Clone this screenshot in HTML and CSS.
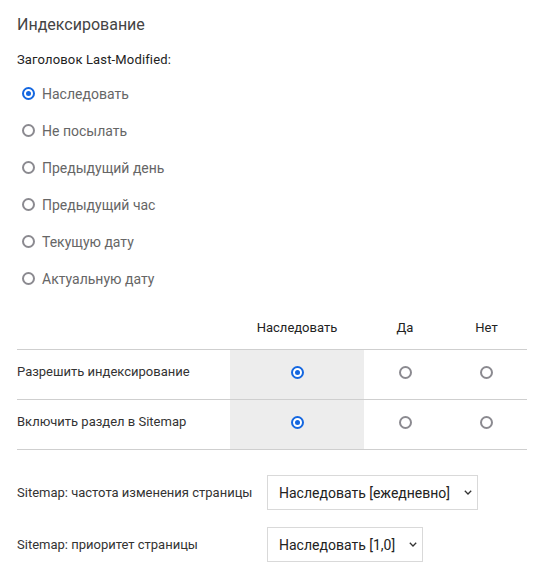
FILE: index.html
```html
<!DOCTYPE html>
<html lang="ru">
<head>
<meta charset="utf-8">
<link rel="stylesheet" href="styles.css">
</head>
<body>
<div class="page">
  <h2 class="title">Индексирование</h2>
  <div class="field-label">Заголовок Last-Modified:</div>
  <ul class="radio-list">
    <li class="radio-item"><span class="radio checked"></span>Наследовать</li>
    <li class="radio-item"><span class="radio"></span>Не посылать</li>
    <li class="radio-item"><span class="radio"></span>Предыдущий день</li>
    <li class="radio-item"><span class="radio"></span>Предыдущий час</li>
    <li class="radio-item"><span class="radio"></span>Текущую дату</li>
    <li class="radio-item"><span class="radio"></span>Актуальную дату</li>
  </ul>
  <table class="matrix">
    <thead>
      <tr>
        <th class="c-label"></th>
        <th class="c-inherit">Наследовать</th>
        <th class="c-yes">Да</th>
        <th class="c-no">Нет</th>
      </tr>
    </thead>
    <tbody>
      <tr>
        <td class="c-label">Разрешить индексирование</td>
        <td class="c-inherit shade"><span class="radio checked"></span></td>
        <td class="c-yes"><span class="radio"></span></td>
        <td class="c-no"><span class="radio"></span></td>
      </tr>
      <tr>
        <td class="c-label">Включить раздел в Sitemap</td>
        <td class="c-inherit shade"><span class="radio checked"></span></td>
        <td class="c-yes"><span class="radio"></span></td>
        <td class="c-no"><span class="radio"></span></td>
      </tr>
    </tbody>
  </table>
  <div class="settings">
    <div class="setting-label">Sitemap: частота изменения страницы</div>
    <div class="select-cell">
      <div class="select"><span>Наследовать [ежедневно]</span><svg class="chev" width="8" height="5" viewBox="0 0 8 5"><path d="M0.8 0.8 L4 4 L7.2 0.8" fill="none" stroke="#333" stroke-width="1.3"/></svg></div>
    </div>
    <div class="setting-label">Sitemap: приоритет страницы</div>
    <div class="select-cell">
      <div class="select"><span>Наследовать [1,0]</span><svg class="chev" width="8" height="5" viewBox="0 0 8 5"><path d="M0.8 0.8 L4 4 L7.2 0.8" fill="none" stroke="#333" stroke-width="1.3"/></svg></div>
    </div>
  </div>
</div>
</body>
</html>
```
FILE: styles.css
```css
html, body {
  margin: 0;
  padding: 0;
  background: #fff;
}
body {
  font-family: Roboto, "Liberation Sans", Arial, sans-serif;
  color: #333;
}
.page {
  padding: 15px 25px 0 17px;
}
.title {
  margin: 0;
  font-size: 16px;
  font-weight: 400;
  line-height: 20px;
  color: #444;
}
.field-label {
  margin-top: 16px;
  font-size: 13px;
  line-height: 18px;
  color: #222;
  letter-spacing: 0.15px;
}
.radio-list {
  list-style: none;
  margin: 6px 0 0 0;
  padding: 0;
}
.radio-item {
  display: flex;
  align-items: center;
  height: 37px;
  padding-left: 5px;
  font-size: 14px;
  color: #666;
}
.radio-item .radio {
  margin-right: 7px;
}
.radio {
  display: inline-block;
  box-sizing: border-box;
  width: 13px;
  height: 13px;
  border: 2px solid #8b8a90;
  border-radius: 50%;
  background: #fff;
  position: relative;
  vertical-align: middle;
}
.radio.checked {
  border-color: #1467e0;
}
.radio.checked::after {
  content: "";
  position: absolute;
  left: 2px;
  top: 2px;
  width: 5px;
  height: 5px;
  border-radius: 50%;
  background: #1467e0;
}
.matrix {
  margin-top: 9px;
  width: 510px;
  border-collapse: collapse;
  font-size: 13px;
  table-layout: fixed;
}
.matrix th {
  font-weight: 400;
  color: #222;
  height: 43px;
  padding: 0;
  text-align: center;
  vertical-align: middle;
  border-bottom: 1px solid #cfcfcf;
}
.matrix td {
  height: 44px;
  padding: 0 0 5px 0;
  text-align: center;
  vertical-align: middle;
  border-bottom: 1px solid #cfcfcf;
  line-height: 0;
}
.matrix td.c-label {
  text-align: left;
  color: #333;
  line-height: 18px;
}
.c-label { width: 213px; }
.c-inherit { width: 134px; }
.c-yes { width: 82px; }
.c-no { width: 81px; }
.shade {
  background: #ededed;
}
.settings {
  margin-top: 25px;
  display: grid;
  grid-template-columns: 250px auto;
  row-gap: 17px;
  align-items: center;
}
.setting-label {
  font-size: 13px;
  color: #333;
}
.select-cell {
  display: flex;
}
.select {
  display: flex;
  align-items: center;
  gap: 14px;
  height: 35px;
  box-sizing: border-box;
  padding: 0 5px 0 11px;
  border: 1px solid #d9d9d9;
  background: #fff;
  font-size: 14px;
  color: #222;
}
.chev {
  display: block;
}
```
